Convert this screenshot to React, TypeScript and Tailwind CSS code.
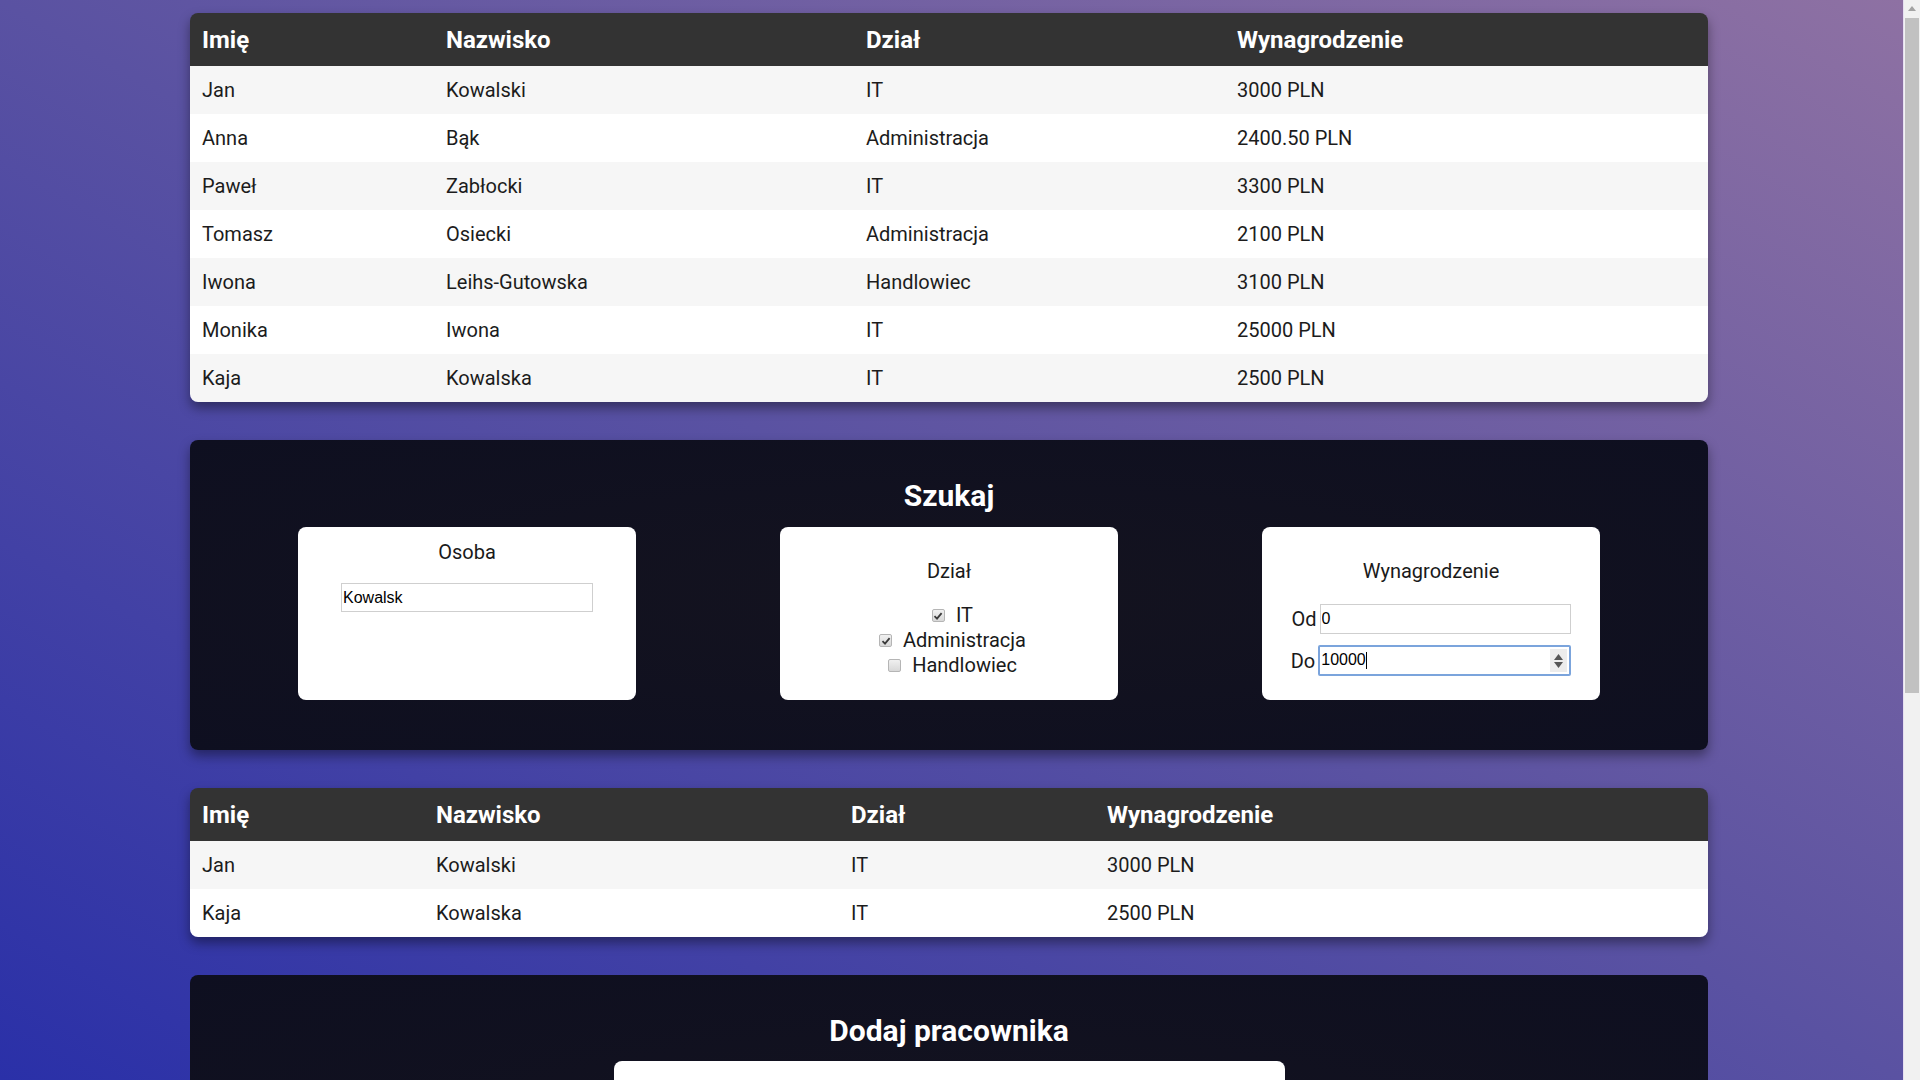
import React from "react";

type Row = { imie: string; nazwisko: string; dzial: string; wyn: string };

const all: Row[] = [
  { imie: "Jan", nazwisko: "Kowalski", dzial: "IT", wyn: "3000 PLN" },
  { imie: "Anna", nazwisko: "Bąk", dzial: "Administracja", wyn: "2400.50 PLN" },
  { imie: "Paweł", nazwisko: "Zabłocki", dzial: "IT", wyn: "3300 PLN" },
  { imie: "Tomasz", nazwisko: "Osiecki", dzial: "Administracja", wyn: "2100 PLN" },
  { imie: "Iwona", nazwisko: "Leihs-Gutowska", dzial: "Handlowiec", wyn: "3100 PLN" },
  { imie: "Monika", nazwisko: "Iwona", dzial: "IT", wyn: "25000 PLN" },
  { imie: "Kaja", nazwisko: "Kowalska", dzial: "IT", wyn: "2500 PLN" },
];

const filtered: Row[] = [all[0], all[6]];

function DataTable({ rows, cols }: { rows: Row[]; cols: string[] }) {
  return (
    <div className="rounded-lg overflow-hidden shadow-[0_6px_12px_rgba(0,0,0,0.4)]">
      <table className="w-full table-fixed border-collapse font-['Roboto',sans-serif]">
        <colgroup>
          <col className={cols[0]} />
          <col className={cols[1]} />
          <col className={cols[2]} />
          <col className={cols[3]} />
        </colgroup>
        <thead>
          <tr className="bg-[#333333] text-white h-[53px]">
            <th className="text-left pl-3 text-[24px] font-bold">Imię</th>
            <th className="text-left pl-3 text-[24px] font-bold">Nazwisko</th>
            <th className="text-left pl-3 text-[24px] font-bold">Dział</th>
            <th className="text-left pl-3 text-[24px] font-bold">Wynagrodzenie</th>
          </tr>
        </thead>
        <tbody>
          {rows.map((r, i) => (
            <tr key={i} className={i % 2 === 0 ? "bg-[#f6f6f6] h-[48px]" : "bg-white h-[48px]"}>
              <td className="pl-3 text-[20px] text-[#1c1c1c]">{r.imie}</td>
              <td className="pl-3 text-[20px] text-[#1c1c1c]">{r.nazwisko}</td>
              <td className="pl-3 text-[20px] text-[#1c1c1c]">{r.dzial}</td>
              <td className="pl-3 text-[20px] text-[#1c1c1c]">{r.wyn}</td>
            </tr>
          ))}
        </tbody>
      </table>
    </div>
  );
}

function Check({ checked }: { checked: boolean }) {
  return (
    <span className="inline-flex items-center justify-center w-[13px] h-[13px] rounded-[2px] border border-[#b5b5b5] bg-[linear-gradient(#f0f0f0,#d8d8d8)] mr-[11px]">
      {checked && (
        <svg width="10" height="10" viewBox="0 0 10 10">
          <path d="M1.5 5.2 L4 7.6 L8.6 2.2" stroke="#3a3a3a" strokeWidth="1.8" fill="none" />
        </svg>
      )}
    </span>
  );
}

export default function App() {
  return (
    <div className="w-full h-screen flex overflow-hidden">
      <div className="flex-1 h-full overflow-hidden bg-[linear-gradient(to_top_right,#2a30a8_0%,#5a52a2_50%,#8e71a3_100%)]">
        <div className="ml-[190px] w-[1518px] pt-[13px] flex flex-col gap-[38px]">
          <DataTable rows={all} cols={["w-[244px]", "w-[420px]", "w-[371px]", "w-[483px]"]} />

          <section className="h-[310px] rounded-lg bg-[radial-gradient(ellipse_at_center,#14131f_0%,#0e0f20_100%)] shadow-[0_6px_12px_rgba(0,0,0,0.4)] pt-[37px] flex flex-col items-center font-['Roboto',sans-serif]">
            <h2 className="text-white text-[30px] font-bold leading-[38px]">Szukaj</h2>
            <div className="mt-[12px] flex justify-center gap-[144px]">
              <div className="w-[338px] h-[173px] bg-white rounded-lg flex flex-col items-center pt-[13px]">
                <div className="text-[20px] leading-[24px] text-[#1a1a1a]">Osoba</div>
                <input
                  readOnly
                  value="Kowalsk"
                  className="mt-[19px] w-[252px] h-[29px] border border-[#cfcfcf] px-[1px] text-[16px] text-black font-['Liberation_Sans',Arial,sans-serif] outline-none"
                />
              </div>
              <div className="w-[338px] h-[173px] bg-white rounded-lg flex flex-col items-center pt-[32px] text-[#1a1a1a]">
                <div className="text-[20px] leading-[24px]">Dział</div>
                <div className="mt-[20px] pl-[7px] flex flex-col items-center text-[20px] leading-[25px]">
                  <div className="flex items-center">
                    <Check checked />
                    <span>IT</span>
                  </div>
                  <div className="flex items-center">
                    <Check checked />
                    <span>Administracja</span>
                  </div>
                  <div className="flex items-center">
                    <Check checked={false} />
                    <span>Handlowiec</span>
                  </div>
                </div>
              </div>
              <div className="w-[338px] h-[173px] bg-white rounded-lg flex flex-col items-center pt-[32px] text-[#1a1a1a]">
                <div className="text-[20px] leading-[24px]">Wynagrodzenie</div>
                <div className="mt-[21px] flex items-center text-[20px]">
                  <span className="mr-[3px]">Od</span>
                  <input
                    readOnly
                    value="0"
                    className="w-[251px] h-[30px] border border-[#cfcfcf] px-[1px] text-[16px] text-black font-['Liberation_Sans',Arial,sans-serif] outline-none"
                  />
                </div>
                <div className="mt-[11px] flex items-center text-[20px]">
                  <span className="mr-[3px]">Do</span>
                  <div className="w-[253px] h-[31px] border-2 border-[#7ba4dc] rounded-[2px] flex items-center">
                    <span className="flex-1 pl-[1px] text-[16px] text-black font-['Liberation_Sans',Arial,sans-serif] leading-none">
                      10000<span className="inline-block w-[1px] h-[17px] bg-black align-middle"></span>
                    </span>
                    <span className="w-[17px] h-[23px] mr-[2px] bg-[#ececec] flex flex-col items-center justify-center gap-[2px]">
                      <svg width="9" height="6" viewBox="0 0 9 6"><path d="M0 6 L4.5 0 L9 6 Z" fill="#555" /></svg>
                      <svg width="9" height="6" viewBox="0 0 9 6"><path d="M0 0 L4.5 6 L9 0 Z" fill="#555" /></svg>
                    </span>
                  </div>
                </div>
              </div>
            </div>
          </section>

          <DataTable rows={filtered} cols={["w-[234px]", "w-[415px]", "w-[256px]", "w-[613px]"]} />

          <section className="h-[400px] rounded-lg bg-[radial-gradient(ellipse_at_center,#14131f_0%,#0e0f20_100%)] pt-[37px] flex flex-col items-center font-['Roboto',sans-serif]">
            <h2 className="text-white text-[30px] font-bold leading-[38px]">Dodaj pracownika</h2>
            <div className="mt-[11px] w-[671px] h-[200px] bg-white rounded-lg"></div>
          </section>
        </div>
      </div>
      <div className="w-[17px] h-full bg-[#f1f1f1] border-l border-[#e6dff0] flex flex-col items-center">
        <div className="h-[17px] w-full flex items-center justify-center">
          <svg width="8" height="5" viewBox="0 0 8 5"><path d="M0 5 L4 0 L8 5 Z" fill="#a3a3a3" /></svg>
        </div>
        <div className="w-[14px] h-[675px] bg-[#c1c1c1] mt-[1px]"></div>
      </div>
    </div>
  );
}
